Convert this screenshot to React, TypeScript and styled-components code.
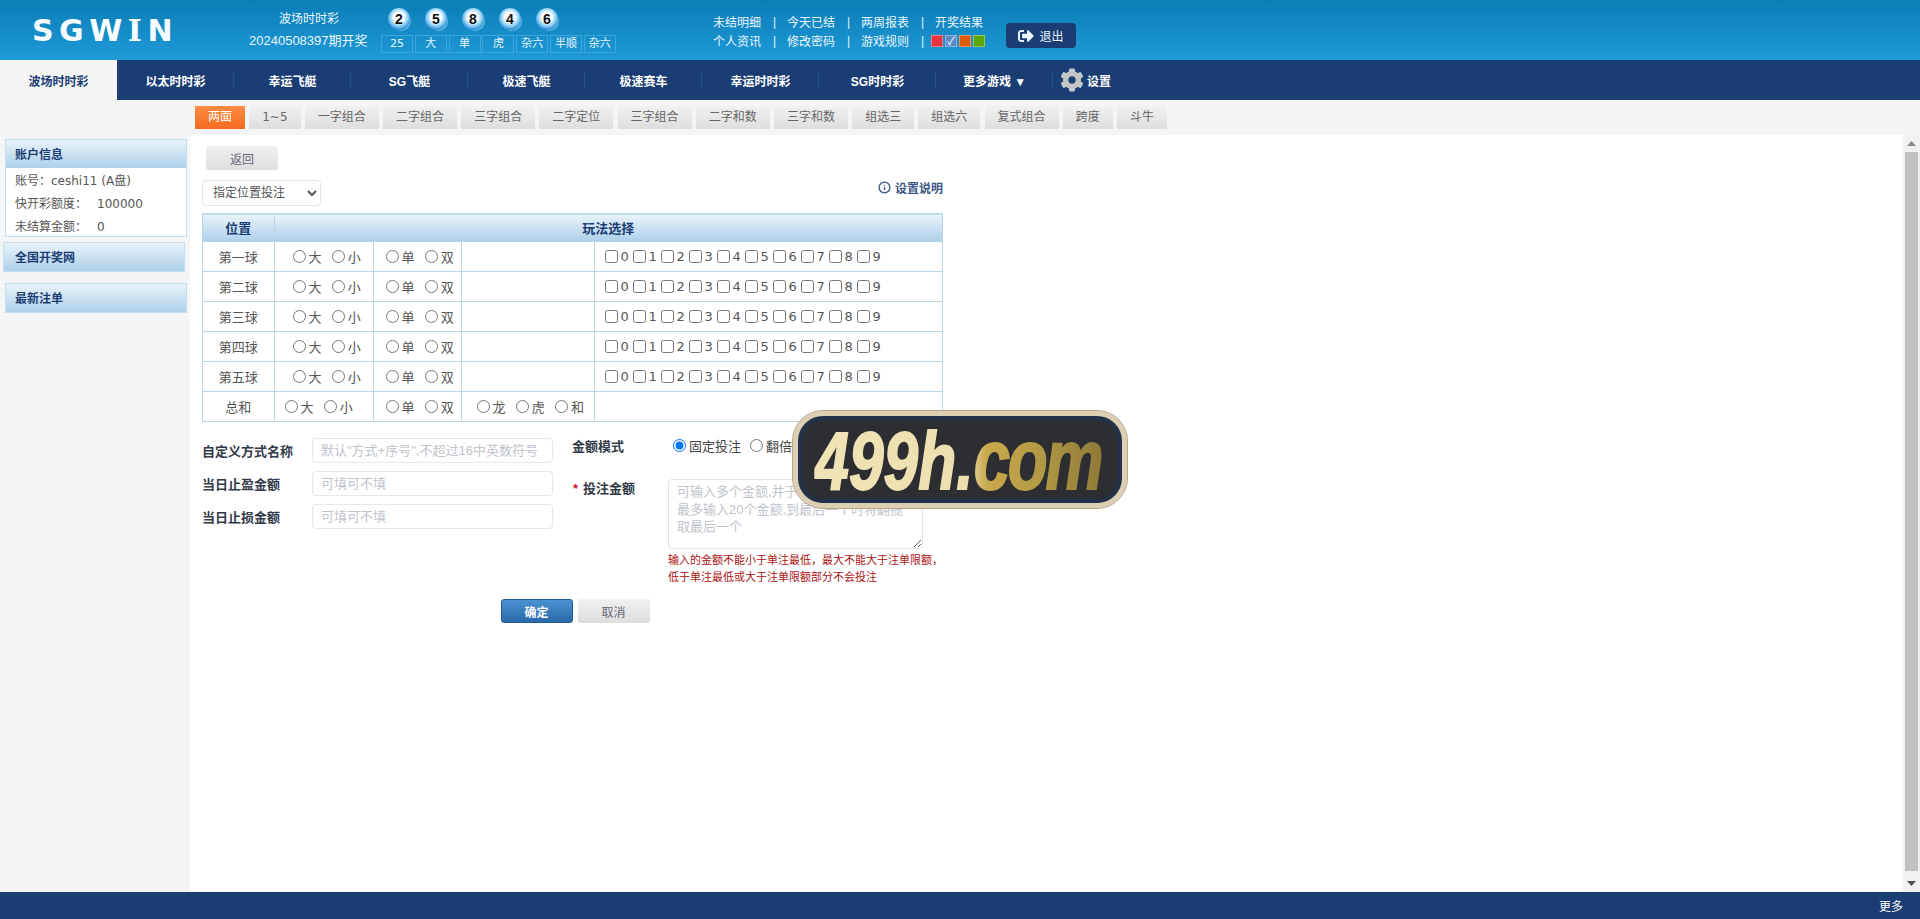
import React from "react";
import styled, { createGlobalStyle } from "styled-components";
import { FaCog, FaSignOutAlt } from "react-icons/fa";
import { Info } from "lucide-react";

const NAVY = "#1a3e74";
const LINE = "#b9d6e6";
const UI_FONT = `"DejaVu Sans", "Noto Sans CJK SC", sans-serif`;
const FORM_FONT = `"Liberation Sans", "Noto Sans CJK SC", sans-serif`;

const GlobalStyle = createGlobalStyle`
    html, body {
        margin: 0;
        height: 100%;
        overflow: hidden;
    }
    body {
        font-family: ${UI_FONT};
        font-size: 12px;
        color: #555;
        background: #f5f5f5;
    }
`;

const Page = styled.div`
    height: 100vh;
    display: flex;
    flex-direction: column;
    position: relative;
`;

/* ---------- header ---------- */
const Header = styled.header`
    height: 60px;
    flex: none;
    display: flex;
    background: linear-gradient(180deg, #0a7cb6 0%, #1f9ad8 100%);
    color: #e8f5ff;
`;

const Brand = styled.div`
    width: 217px;
    padding-left: 32px;
    font-family: "DejaVu Sans", sans-serif;
    font-size: 30px;
    font-weight: bold;
    letter-spacing: 5.5px;
    line-height: 62px;
    color: #f6fcff;
    white-space: nowrap;
`;

const BrandI = styled.span`
    font-family: "DejaVu Serif", serif;
`;

const DrawInfo = styled.div`
    width: 132px;
    padding-top: 8px;
    line-height: 22px;
    font-family: ${FORM_FONT};
    font-size: 13px;
    white-space: nowrap;
`;

const DrawTitle = styled.div`
    width: 120px;
    font-size: 12px;
    text-align: center;
`;

const Results = styled.div`
    width: 332px;
    padding-top: 8px;
`;

const Balls = styled.div`
    display: flex;
    gap: 15px;
    margin-left: 7px;
`;

const Ball = styled.span`
    width: 22px;
    height: 22px;
    border-radius: 50%;
    display: flex;
    align-items: center;
    justify-content: center;
    font-family: "Liberation Sans", sans-serif;
    font-size: 14px;
    font-weight: bold;
    color: #111;
    background: radial-gradient(circle at 50% 42%, #fff 0, #fff 30%, #9ad6f7 50%, #2c8fd8 74%, #1c78c4 100%);
    box-shadow: 2px 2px 0 -1px rgba(170, 220, 250, 0.55);
`;

const Stats = styled.div`
    display: flex;
    gap: 1.8px;
    margin-top: 5px;
`;

const Stat = styled.span`
    width: 30px;
    height: 16px;
    border: 1px solid #3fa6dc;
    text-align: center;
    font-size: 11px;
    line-height: 16px;
    white-space: nowrap;
`;

const Links = styled.div`
    width: 293px;
    padding-top: 12px;
    font-family: ${FORM_FONT};
`;

const LinkRow = styled.div`
    display: flex;
    align-items: center;
    height: 19px;
    white-space: nowrap;
`;

const LinkItem = styled.a`
    width: 49px;
    color: #eaf6ff;
`;

const LinkSep = styled.span`
    width: 25px;
    text-align: center;
`;

const Skins = styled.div`
    display: flex;
    gap: 2px;
    margin-left: -4px;
`;

const Skin = styled.span<{ $color: string }>`
    width: 10px;
    height: 10px;
    border: 1px solid rgba(255, 255, 255, 0.35);
    background: ${(props) => props.$color};
    color: #fff;
    font-size: 11px;
    line-height: 10px;
    text-align: center;
`;

const ExitButton = styled.button`
    width: 70px;
    height: 25px;
    margin-top: 23px;
    border: 0;
    border-radius: 4px;
    background: ${NAVY};
    color: #e8f5ff;
    font-family: ${FORM_FONT};
    font-size: 12px;
    display: flex;
    align-items: center;
    justify-content: center;
    gap: 5px;
    padding: 0;
`;

/* ---------- game nav ---------- */
const GameNav = styled.nav`
    height: 40px;
    flex: none;
    display: flex;
    align-items: stretch;
    background: ${NAVY};
`;

const GameTab = styled.a<{ $active?: boolean }>`
    width: 117px;
    display: flex;
    align-items: center;
    justify-content: center;
    font-family: ${FORM_FONT};
    font-size: 12px;
    font-weight: bold;
    color: ${(props) => (props.$active ? NAVY : "#fff")};
    background: ${(props) => (props.$active ? "#f5f5f5" : "transparent")};
    position: relative;
    &::after {
        content: "";
        display: ${(props) => (props.$active ? "none" : "block")};
        position: absolute;
        right: 0;
        top: 12px;
        bottom: 12px;
        width: 1px;
        background: #27508a;
    }
`;

const Settings = styled.a`
    display: flex;
    align-items: center;
    gap: 3px;
    margin-left: 7px;
    font-family: ${FORM_FONT};
    font-size: 12px;
    font-weight: bold;
    color: #fff;
`;

/* ---------- play tabs ---------- */
const PlayBar = styled.div`
    height: 35px;
    flex: none;
    box-sizing: border-box;
    padding: 6px 0 0 195px;
    display: flex;
    gap: 4.2px;
    background: #f5f5f5;
`;

const PlayTab = styled.a<{ $active?: boolean }>`
    height: 23px;
    padding: 0 13px;
    line-height: 23px;
    font-size: 12px;
    color: ${(props) => (props.$active ? "#fff" : "#666")};
    background: ${(props) =>
        props.$active
            ? "linear-gradient(180deg, #ff8c42 0%, #f4691f 100%)"
            : "linear-gradient(180deg, #f1f1f1 0%, #dedede 100%)"};
`;

/* ---------- body ---------- */
const Body = styled.div`
    flex: 1;
    min-height: 0;
    display: flex;
`;

const Sidebar = styled.aside`
    width: 190px;
    flex: none;
    padding-top: 4px;
    box-sizing: border-box;
`;

const Panel = styled.section<{ $left: number; $bottom: number }>`
    width: 182px;
    margin: 0 0 ${(props) => props.$bottom}px ${(props) => props.$left}px;
    box-sizing: border-box;
    border: 1px solid #c5dcec;
    background: #fff;
`;

const PanelTitle = styled.h3<{ $indent: number }>`
    margin: 0;
    height: 28px;
    padding-left: ${(props) => props.$indent}px;
    line-height: 30px;
    font-family: ${FORM_FONT};
    font-size: 12px;
    font-weight: bold;
    color: ${NAVY};
    background: linear-gradient(180deg, #eaf3fa 0%, #acd0ea 100%);
`;

const PanelBody = styled.div`
    box-sizing: border-box;
    padding: 2px 0 0 9px;
    height: 68px;
`;

const AccountRow = styled.div`
    height: 23px;
    line-height: 23px;
    display: flex;
    white-space: nowrap;
`;

const AccountKey = styled.span`
    width: 82px;
`;

const Main = styled.main`
    flex: 1;
    min-width: 0;
    background: #fff;
    padding: 11px 0 0 12px;
    box-sizing: border-box;
`;

const GreyButton = styled.button`
    width: 72px;
    height: 24px;
    border: 0;
    border-radius: 2px;
    padding: 0;
    font-family: ${FORM_FONT};
    font-size: 12px;
    color: #667;
    background: linear-gradient(180deg, #f1f1f1 0%, #dedede 100%);
`;

const BackButton = styled(GreyButton)`
    display: block;
    margin-left: 4px;
`;

const Toolbar = styled.div`
    width: 741px;
    margin-top: 10px;
    height: 26px;
    display: flex;
    align-items: center;
    justify-content: space-between;
`;

const ModeSelect = styled.select`
    width: 119px;
    height: 26px;
    padding: 0 6px;
    border: 1px solid #e4e4e4;
    border-radius: 4px;
    background: #fff;
    font-family: ${FORM_FONT};
    font-size: 12px;
    color: #555;
`;

const HelpLink = styled.a`
    display: flex;
    align-items: center;
    gap: 4px;
    margin-bottom: 12px;
    font-family: ${FORM_FONT};
    font-weight: bold;
    font-size: 12px;
    color: #3b5684;
`;

const BetTable = styled.table`
    width: 740px;
    margin-top: 7px;
    border-collapse: collapse;
    table-layout: fixed;
`;

const Col = styled.col<{ $w: number }>`
    width: ${(props) => props.$w}px;
`;

const HeadCell = styled.th`
    height: 27px;
    padding: 0;
    border: 1px solid ${LINE};
    font-family: ${FORM_FONT};
    font-size: 13px;
    font-weight: bold;
    color: ${NAVY};
    background: linear-gradient(180deg, #eaf3fa 0%, #acd0ea 100%);
`;

const Cell = styled.td<{ $pad?: number; $center?: boolean }>`
    height: 29px;
    padding: 0 0 0 ${(props) => props.$pad ?? 0}px;
    border: 1px solid ${LINE};
    font-size: 13px;
    text-align: ${(props) => (props.$center ? "center" : "left")};
`;

const Options = styled.div`
    display: flex;
    align-items: center;
    white-space: nowrap;
`;

const RadioOption = styled.label`
    width: 39.3px;
    flex: none;
    display: flex;
    align-items: center;
`;

const NumberOption = styled.label`
    width: 28px;
    flex: none;
    display: flex;
    align-items: center;
`;

const Tick = styled.input`
    width: 13px;
    height: 13px;
    margin: 0 3px 0 0;
    flex: none;
`;

const FormArea = styled.div`
    margin-top: 16px;
    display: flex;
`;

const FormLeft = styled.div`
    width: 370px;
    display: flex;
    flex-direction: column;
    gap: 8px;
`;

const FormRow = styled.div`
    display: flex;
    align-items: center;
`;

const FieldLabel = styled.label`
    width: 110px;
    flex: none;
    font-family: ${FORM_FONT};
    font-size: 13px;
    font-weight: bold;
    color: #333a4a;
    white-space: nowrap;
`;

const TextField = styled.input`
    width: 241px;
    height: 25px;
    box-sizing: border-box;
    padding: 0 8px;
    border: 1px solid #e4e7ed;
    border-radius: 4px;
    font-family: ${FORM_FONT};
    font-size: 13px;
    &::placeholder {
        color: #c0c4cc;
    }
`;

const FormRight = styled.div`
    display: flex;
    flex-direction: column;
`;

const ModeRow = styled.div`
    height: 18px;
    margin-top: -2px;
    display: flex;
    align-items: center;
`;

const ModeLabel = styled(FieldLabel)`
    width: 96px;
`;

const ModeOption = styled.label`
    display: flex;
    align-items: center;
    font-family: ${FORM_FONT};
    font-size: 13px;
    color: #444;
    white-space: nowrap;
    margin-right: 4px;
`;

const ModeRadio = styled.input`
    width: 13px;
    height: 13px;
    margin: 0 3px 0 5px;
`;

const AmountRow = styled.div`
    display: flex;
    margin-top: 25px;
`;

const AmountLabel = styled(FieldLabel)`
    width: 96px;
    padding-top: 1px;
    line-height: 18px;
`;

const Star = styled.span`
    color: #c8161d;
    margin-right: 5px;
    margin-left: 1px;
`;

const AmountInput = styled.textarea`
    display: block;
    width: 255px;
    height: 70px;
    box-sizing: border-box;
    padding: 3px 8px;
    border: 1px solid #dfe3ea;
    border-radius: 4px;
    font-family: ${FORM_FONT};
    font-size: 13px;
    line-height: 17.7px;
    &::placeholder {
        color: #c0c4cc;
    }
`;

const AmountHint = styled.div`
    margin-top: 3px;
    font-family: ${FORM_FONT};
    font-size: 11px;
    line-height: 17px;
    color: #ab1212;
    white-space: nowrap;
`;

const Actions = styled.div`
    width: 746px;
    margin-top: 13px;
    display: flex;
    justify-content: center;
    gap: 5px;
`;

const ConfirmButton = styled(GreyButton)`
    border: 1px solid #1f5c99;
    box-sizing: border-box;
    border-radius: 3px;
    color: #fff;
    font-weight: bold;
    background: linear-gradient(180deg, #4b92d2 0%, #2a69a9 100%);
`;

const ScrollTrack = styled.div`
    width: 17px;
    flex: none;
    display: flex;
    flex-direction: column;
    align-items: center;
    background: #f1f1f1;
`;

const ScrollArrow = styled.div`
    height: 17px;
    flex: none;
    display: flex;
    align-items: center;
    justify-content: center;
`;

const ScrollThumb = styled.div`
    width: 13px;
    flex: 1;
    margin-bottom: 4px;
    background: #c1c1c1;
`;

const Footer = styled.footer`
    height: 27px;
    flex: none;
    padding-right: 17px;
    display: flex;
    align-items: center;
    justify-content: flex-end;
    background: ${NAVY};
    color: #fff;
    font-family: ${FORM_FONT};
    font-size: 12px;
`;

/* ---------- ad badge lying over the page ---------- */
const AdBadge = styled.div`
    position: absolute;
    left: 793px;
    top: 411px;
    width: 334px;
    height: 97px;
    box-sizing: border-box;
    border: 5px solid #dccfb4;
    outline: 1px solid #b5a488;
    border-radius: 30px;
    background: #2c2e32;
    box-shadow: inset 0 0 0 4px #22324d;
    display: flex;
    align-items: center;
    justify-content: center;
    overflow: hidden;
`;

const AdText = styled.span`
    display: inline-block;
    margin-right: 5px;
    font-family: "Liberation Sans", sans-serif;
    font-size: 82px;
    font-weight: bold;
    font-style: italic;
    line-height: 87px;
    white-space: nowrap;
    transform: scaleX(0.76);
    color: transparent;
    -webkit-text-stroke: 2px transparent;
    background: linear-gradient(90deg, #f0e4b6 0%, #ecdfaf 53%, #c9a84c 60%, #b39a45 78%, #8f7a38 100%);
    -webkit-background-clip: text;
    background-clip: text;
`;

const AdSuffix = styled.span`
    font-size: 86px;
    letter-spacing: -3px;
`;

const games = ["波场时时彩", "以太时时彩", "幸运飞艇", "SG飞艇", "极速飞艇", "极速赛车", "幸运时时彩", "SG时时彩", "更多游戏 ▼"];
const plays = ["两面", "1~5", "一字组合", "二字组合", "三字组合", "二字定位", "三字组合", "二字和数", "三字和数", "组选三", "组选六", "复式组合", "跨度", "斗牛"];
const balls = [2, 5, 8, 4, 6];
const stats = ["25", "大", "单", "虎", "杂六", "半顺", "杂六"];
const positions = ["第一球", "第二球", "第三球", "第四球", "第五球"];
const digits = [0, 1, 2, 3, 4, 5, 6, 7, 8, 9];

function radios(name: string, labels: string[]) {
    return labels.map((label) => (
        <RadioOption key={label}>
            <Tick type="radio" name={name} />
            {label}
        </RadioOption>
    ));
}

export default function App() {
    return (
        <Page>
            <GlobalStyle />
            <Header>
                <Brand>
                    SGW<BrandI>I</BrandI>N
                </Brand>
                <DrawInfo>
                    <DrawTitle>波场时时彩</DrawTitle>
                    <div>20240508397期开奖</div>
                </DrawInfo>
                <Results>
                    <Balls>
                        {balls.map((ball, i) => (
                            <Ball key={i}>{ball}</Ball>
                        ))}
                    </Balls>
                    <Stats>
                        {stats.map((stat, i) => (
                            <Stat key={i}>{stat}</Stat>
                        ))}
                    </Stats>
                </Results>
                <Links>
                    <LinkRow>
                        <LinkItem>未结明细</LinkItem>
                        <LinkSep>|</LinkSep>
                        <LinkItem>今天已结</LinkItem>
                        <LinkSep>|</LinkSep>
                        <LinkItem>两周报表</LinkItem>
                        <LinkSep>|</LinkSep>
                        <LinkItem>开奖结果</LinkItem>
                    </LinkRow>
                    <LinkRow>
                        <LinkItem>个人资讯</LinkItem>
                        <LinkSep>|</LinkSep>
                        <LinkItem>修改密码</LinkItem>
                        <LinkSep>|</LinkSep>
                        <LinkItem>游戏规则</LinkItem>
                        <LinkSep>|</LinkSep>
                        <Skins>
                            <Skin $color="#e8323f" />
                            <Skin $color="#5b8ac6">✓</Skin>
                            <Skin $color="#e05a00" />
                            <Skin $color="#5aa800" />
                        </Skins>
                    </LinkRow>
                </Links>
                <ExitButton>
                    <FaSignOutAlt size={16} />
                    退出
                </ExitButton>
            </Header>

            <GameNav>
                {games.map((game, i) => (
                    <GameTab key={game} $active={i === 0}>
                        {game}
                    </GameTab>
                ))}
                <Settings>
                    <FaCog size={24} color="#c4c6c9" />
                    设置
                </Settings>
            </GameNav>

            <PlayBar>
                {plays.map((play, i) => (
                    <PlayTab key={i} $active={i === 0}>
                        {play}
                    </PlayTab>
                ))}
            </PlayBar>

            <Body>
                <Sidebar>
                    <Panel $left={5} $bottom={5}>
                        <PanelTitle $indent={9}>账户信息</PanelTitle>
                        <PanelBody>
                            <AccountRow>账号：ceshi11 (A盘)</AccountRow>
                            <AccountRow>
                                <AccountKey>快开彩额度：</AccountKey>100000
                            </AccountRow>
                            <AccountRow>
                                <AccountKey>未结算金额：</AccountKey>0
                            </AccountRow>
                        </PanelBody>
                    </Panel>
                    <Panel $left={3} $bottom={11}>
                        <PanelTitle $indent={11}>全国开奖网</PanelTitle>
                    </Panel>
                    <Panel $left={5} $bottom={0}>
                        <PanelTitle $indent={9}>最新注单</PanelTitle>
                    </Panel>
                </Sidebar>

                <Main>
                    <BackButton>返回</BackButton>
                    <Toolbar>
                        <ModeSelect defaultValue="pos">
                            <option value="pos">指定位置投注</option>
                        </ModeSelect>
                        <HelpLink>
                            <Info size={13} strokeWidth={2.4} />
                            设置说明
                        </HelpLink>
                    </Toolbar>

                    <BetTable>
                        <colgroup>
                            <Col $w={71.5} />
                            <Col $w={99} />
                            <Col $w={88} />
                            <Col $w={133} />
                            <Col $w={348.5} />
                        </colgroup>
                        <thead>
                            <tr>
                                <HeadCell>位置</HeadCell>
                                <HeadCell colSpan={4}>玩法选择</HeadCell>
                            </tr>
                        </thead>
                        <tbody>
                            {positions.map((position) => (
                                <tr key={position}>
                                    <Cell $center>{position}</Cell>
                                    <Cell $pad={18}>
                                        <Options>{radios(position + "size", ["大", "小"])}</Options>
                                    </Cell>
                                    <Cell $pad={12}>
                                        <Options>{radios(position + "odd", ["单", "双"])}</Options>
                                    </Cell>
                                    <Cell />
                                    <Cell $pad={10}>
                                        <Options>
                                            {digits.map((digit) => (
                                                <NumberOption key={digit}>
                                                    <Tick type="checkbox" />
                                                    {digit}
                                                </NumberOption>
                                            ))}
                                        </Options>
                                    </Cell>
                                </tr>
                            ))}
                            <tr>
                                <Cell $center>总和</Cell>
                                <Cell $pad={10}>
                                    <Options>{radios("sumsize", ["大", "小"])}</Options>
                                </Cell>
                                <Cell $pad={12}>
                                    <Options>{radios("sumodd", ["单", "双"])}</Options>
                                </Cell>
                                <Cell $pad={15}>
                                    <Options>{radios("sumdragon", ["龙", "虎", "和"])}</Options>
                                </Cell>
                                <Cell />
                            </tr>
                        </tbody>
                    </BetTable>

                    <FormArea>
                        <FormLeft>
                            <FormRow>
                                <FieldLabel>自定义方式名称</FieldLabel>
                                <TextField placeholder={'默认"方式+序号",不超过16中英数符号'} />
                            </FormRow>
                            <FormRow>
                                <FieldLabel>当日止盈金额</FieldLabel>
                                <TextField placeholder="可填可不填" />
                            </FormRow>
                            <FormRow>
                                <FieldLabel>当日止损金额</FieldLabel>
                                <TextField placeholder="可填可不填" />
                            </FormRow>
                        </FormLeft>
                        <FormRight>
                            <ModeRow>
                                <ModeLabel>金额模式</ModeLabel>
                                <ModeOption>
                                    <ModeRadio type="radio" name="mode" defaultChecked />
                                    固定投注
                                </ModeOption>
                                <ModeOption>
                                    <ModeRadio type="radio" name="mode" />
                                    翻倍投注
                                </ModeOption>
                            </ModeRow>
                            <AmountRow>
                                <AmountLabel>
                                    <Star>*</Star>投注金额
                                </AmountLabel>
                                <div>
                                    <AmountInput placeholder="可输入多个金额,并于每期依次循环投注,最多输入20个金额,到最后一个时将翻揽取最后一个" />
                                    <AmountHint>
                                        输入的金额不能小于单注最低，最大不能大于注单限额，
                                        <br />
                                        低于单注最低或大于注单限额部分不会投注
                                    </AmountHint>
                                </div>
                            </AmountRow>
                        </FormRight>
                    </FormArea>

                    <Actions>
                        <ConfirmButton>确定</ConfirmButton>
                        <GreyButton>取消</GreyButton>
                    </Actions>
                </Main>

                <ScrollTrack>
                    <ScrollArrow>
                        <svg width="9" height="5" viewBox="0 0 9 5">
                            <path d="M4.5 0L9 5H0z" fill="#8a8a8a" />
                        </svg>
                    </ScrollArrow>
                    <ScrollThumb />
                    <ScrollArrow>
                        <svg width="9" height="5" viewBox="0 0 9 5">
                            <path d="M0 0h9L4.5 5z" fill="#505050" />
                        </svg>
                    </ScrollArrow>
                </ScrollTrack>
            </Body>

            <Footer>更多</Footer>

            <AdBadge>
                <AdText>
                    499h.<AdSuffix>com</AdSuffix>
                </AdText>
            </AdBadge>
        </Page>
    );
}
